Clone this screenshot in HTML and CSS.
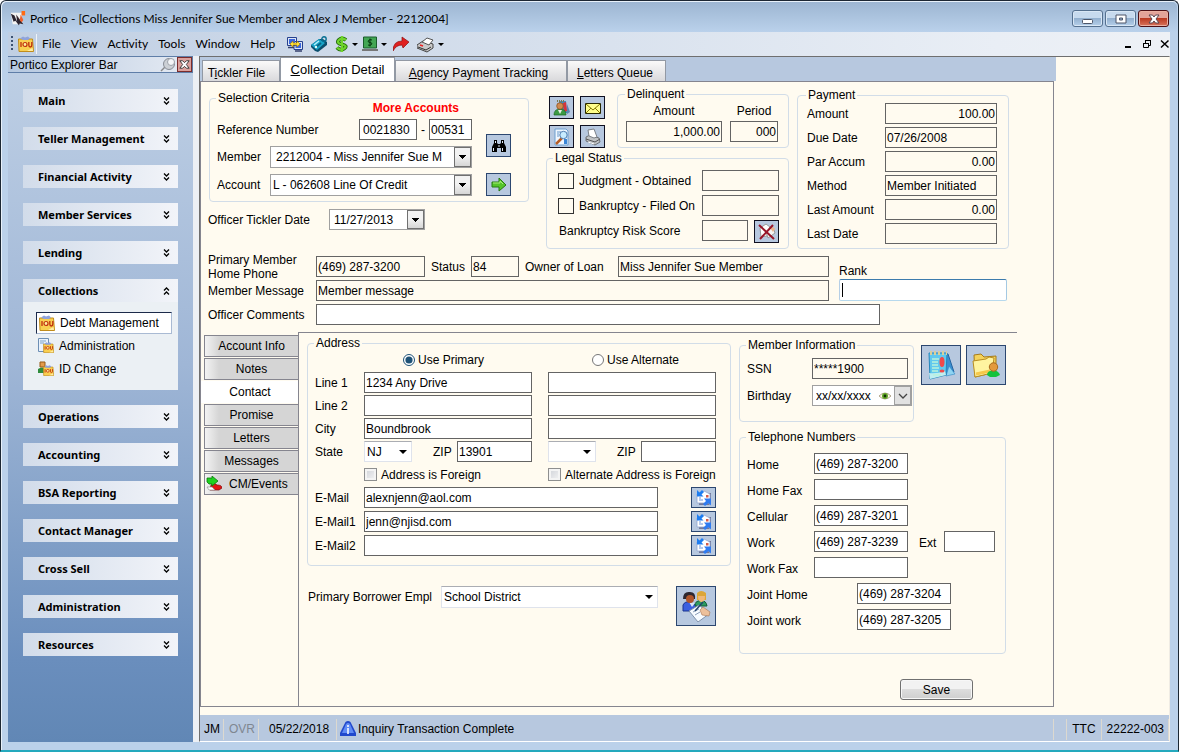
FILE: index.html
```html
<!DOCTYPE html>
<html lang="en">
<head>
  <meta charset="UTF-8" />
  <meta name="viewport" content="width=device-width, initial-scale=1.0"/>
  <title>Portico - Collections</title>
  <link rel="stylesheet" href="styles.css">
</head>
<body>
  <!-- shared icons -->
  <svg class="defs" aria-hidden="true">
    <symbol id="down" viewBox="0 0 7 8"><path d="M1 .5 3.5 3 6 .5M1 4.500 3.500 7 6 4.500" fill="none" stroke="#000" stroke-width="1.300"/></symbol>
    <symbol id="up" viewBox="0 0 7 8"><path d="M1 3.500 3.500 1 6 3.500M1 7.500 3.500 5 6 7.500" fill="none" stroke="#000" stroke-width="1.300"/></symbol>
    <symbol id="iou" viewBox="0 0 16 16">
      <path d="M.5 3h14l1 12.500H1z" fill="#f9cf50" stroke="#c08c1c"/>
      <path d="M2 2.500l3-2 2 1 3-1 2 2-2 1.500H5z" fill="#8fa3dc"/>
      <path d="M3 6v5M10.800 6v3q0 2 1.500 2t1.500-2V6" fill="none" stroke="#c03010" stroke-width="1.300"/>
      <circle cx="7" cy="8.500" r="2" fill="#fff0a0" stroke="#c03010" stroke-width="1.200"/>
      <path d="M9 15h6l-.5-3z" fill="#ffeda5"/>
    </symbol>
    <symbol id="mailsync" viewBox="0 0 16 16">
      <path d="M4 3h11v10l-2 2H3z" fill="#74789a"/>
      <path d="M1 4l7-3 6 3v9H1z" fill="#fff" stroke="#8fa5d0" stroke-width=".8"/>
      <path d="M3 10h4M3 8h2" stroke="#6b92d8"/>
      <path d="M10 5h2.500v2.500H10z" fill="#d55b48"/>
      <path d="M1 0v6.500h6.500l-2-2L8 2 6 0 3.500 2.500z" fill="#1e7df0"/>
      <path d="M15 8.500H8l2 2.500-3 3 2 2 3.500-3 2.500 2.500z" fill="#2f7bf0"/>
    </symbol>
  </svg>

  <div class="window">
    <header class="titlebar">
      <svg class="app-icon" viewBox="0 0 18 18"><path d="M1 2h12v13H3z" fill="#f4f4f4"/><path d="M1 3l4 2 3 7-1-8 8 11-4-1-1 2-4-5-2 1z" fill="#2a2430"/><path d="M6 4l5 6 1-6 3 6-2 3z" fill="#f0602b"/><path d="M13 0h4v5h-4z" fill="#ff6a13"/></svg>
      <h1>Portico - [Collections Miss Jennifer Sue Member and Alex J Member - 2212004]</h1>
      <div class="window-buttons">
        <button aria-label="Minimize"><svg viewBox="0 0 14 12"><rect x="1.500" y="6.500" width="10" height="4" rx="1" fill="#fff" stroke="#4c5568"/></svg></button>
        <button aria-label="Maximize"><svg viewBox="0 0 14 12"><path fill-rule="evenodd" d="M2 2h10v8H2zM5.500 5v2h3V5z" fill="#fff" stroke="#4c5568"/></svg></button>
        <button class="close" aria-label="Close"><svg viewBox="0 0 14 12"><path d="M2 2h3.500L7 4l1.500-2H12L9 6l3 4H8.500L7 8l-1.500 2H2l3-4z" fill="#fff" stroke="#5a4650"/></svg></button>
      </div>
    </header>

    <nav class="menubar">
      <span class="grip"></span>
      <svg class="icon16"><use href="#iou"/></svg>
      <span class="menu-sep"></span>
      <div class="menus">
        <button>File</button>
        <button>View</button>
        <button>Activity</button>
        <button>Tools</button>
        <button>Window</button>
        <button>Help</button>
      </div>
      <div class="tools">
        <button aria-label="Transfer"><svg class="icon16" viewBox="0 0 16 16"><path d="M.5 1.500h9v8h-9zM7 5.500h8.500v8H7z" fill="#dce5f5" stroke="#26418e"/><path d="M2 3h6v5H2zM8.500 7H14v5H8.500z" fill="#3b67dc"/><path d="M1 11.500h6M8 15h7" stroke="#34406e" stroke-width="1.500"/><path d="M3 8l3-3v2h4V5l3 3-3 3V9H6v2z" fill="#ffe23a" stroke="#a67b00" stroke-width=".6"/></svg></button>
        <button aria-label="Ticket"><svg class="icon16" viewBox="0 0 16 16"><path d="M0 9L8 3l4 0 4 3v3l-9 7-3-1-4-4z" fill="#0b4f6e"/><path d="M0 9l8-6 6 4-8 7z" fill="#18a4c8"/><path d="M3 9l5-4" stroke="#b7f2ff" stroke-width="1.500"/><path d="M5 11l5-4" stroke="#0a6687" stroke-width="2"/><circle cx="5" cy="11" r="1.200" fill="#dff"/><circle cx="13" cy="3" r="2.200" fill="none" stroke="#087093" stroke-width="1.400"/></svg></button>
        <button class="drop" aria-label="Money"><svg class="icon14" viewBox="0 0 14 16"><path d="M11 4Q7 1 4 4t3 4.500 2 4-7-1" fill="none" stroke="#276c0e" stroke-width="4"/><path d="M11 4Q7 1 4 4t3 4.500 2 4-7-1M7 0v16" fill="none" stroke="#6fd52c" stroke-width="2.200"/></svg></button>
        <button class="drop" aria-label="Cash"><svg class="icon16" viewBox="0 0 16 16"><path d="M1.500 1h13v11h-13z" fill="#43a654" stroke="#1a5c2c"/><path d="M0 13h16v2H0z" fill="#777"/><path d="M10 4Q8 3 6.500 4.500T8 6.500t1.500 2T6 9M8 2.500v8" fill="none" stroke="#05350e"/></svg></button>
        <button aria-label="Forward"><svg class="icon16" viewBox="0 0 16 16"><path d="M0 15Q0 5 9 5V1l7 5-6 6-1-3Q3 9 0 15z" fill="#e02020" stroke="#8e1010" stroke-width=".7"/></svg></button>
        <button class="drop" aria-label="Print"><svg class="icon18" viewBox="0 0 18 16"><path d="M0 9l6-4 10 3v4l-6 4-10-4z" fill="#c9c9c9" stroke="#444"/><path d="M5 6l5-4 6 2-4 5z" fill="#fff" stroke="#555"/><path d="M1 11l8 3 5-3" fill="none" stroke="#333"/><path d="M3 9l3 1" stroke="#e22" stroke-width="1.500"/></svg></button>
      </div>
      <div class="mdi-buttons">
        <button aria-label="Minimize document"><svg viewBox="0 0 10 10"><path d="M1 8h6" stroke="#000" stroke-width="2"/></svg></button>
        <button aria-label="Restore document"><svg viewBox="0 0 10 10"><path d="M1.500 4.500h5v4h-5zM1 4.500h6M3.500 4V1.500h5v5H7M3 1.500h6" fill="none" stroke="#000"/></svg></button>
        <button aria-label="Close document"><svg viewBox="0 0 10 10"><path d="M1 1.500l7.500 7M8.500 1.500 1 8.500" stroke="#000" stroke-width="1.500"/></svg></button>
      </div>
    </nav>

    <div class="workspace">
      <aside class="explorer">
        <div class="explorer-title">
          <span>Portico Explorer Bar</span>
          <svg class="icon16" viewBox="0 0 16 16"><path d="M1 14l5-5" stroke="#888" stroke-width="1.500"/><circle cx="9" cy="7" r="5.500" fill="#ccd0d5" stroke="#888d96"/><circle cx="11" cy="5" r="3.500" fill="#f4f5f7" stroke="#9da2aa"/></svg>
          <button aria-label="Close explorer"><svg viewBox="0 0 14 14"><path d="M2 3h3l2 2 2-2h3L9 7l3 4H9L7 9l-2 2H2l3-4z" fill="#fff" stroke="#333"/></svg></button>
        </div>
        <div class="groups">
          <button class="group-head">Main<svg><use href="#down"/></svg></button>
          <button class="group-head">Teller Management<svg><use href="#down"/></svg></button>
          <button class="group-head">Financial Activity<svg><use href="#down"/></svg></button>
          <button class="group-head">Member Services<svg><use href="#down"/></svg></button>
          <button class="group-head">Lending<svg><use href="#down"/></svg></button>
          <div>
            <button class="group-head">Collections<svg><use href="#up"/></svg></button>
            <div class="group-body">
              <a href="#" class="active"><svg class="icon16"><use href="#iou"/></svg>Debt Management</a>
              <a href="#"><svg class="icon16" viewBox="0 0 16 16"><path d="M.5.500h10v13H.500z" fill="#eaf2fb" stroke="#6d8fb5"/><path d="M2 3h6M2 5h4" stroke="#7ba3cc"/><use href="#iou" x="5" y="4" width="11" height="11"/></svg>Administration</a>
              <a href="#"><svg class="icon16" viewBox="0 0 16 16"><path d="M0 8q4-3 8 0v4H0z" fill="#2f8c3c"/><path d="M2 1h5v5H2z" fill="#e39a4a" stroke="#955a18"/><use href="#iou" x="5" y="4" width="11" height="11"/></svg>ID Change</a>
            </div>
          </div>
          <button class="group-head">Operations<svg><use href="#down"/></svg></button>
          <button class="group-head">Accounting<svg><use href="#down"/></svg></button>
          <button class="group-head">BSA Reporting<svg><use href="#down"/></svg></button>
          <button class="group-head">Contact Manager<svg><use href="#down"/></svg></button>
          <button class="group-head">Cross Sell<svg><use href="#down"/></svg></button>
          <button class="group-head">Administration<svg><use href="#down"/></svg></button>
          <button class="group-head">Resources<svg><use href="#down"/></svg></button>
        </div>
      </aside>

      <div class="document">
        <main class="collection">
          <div class="tabs">
            <button class="tab-tickler">T<u>i</u>ckler File</button>
            <button class="tab-detail active"><u>C</u>ollection Detail</button>
            <button class="tab-agency"><u>A</u>gency Payment Tracking</button>
            <button class="tab-letters"><u>L</u>etters Queue</button>
          </div>

          <form class="page">
            <div class="top">
              <div class="col-select">
                <fieldset class="selection">
                  <legend>Selection Criteria</legend>
                  <div class="selection-fields">
                    <strong class="more">More Accounts</strong>
                    <div class="line">
                      <label for="ref">Reference Number</label>
                      <span class="push"></span>
                      <input id="ref" class="w-ref" value="0021830"><span class="dash">-</span><input class="w-suffix" aria-label="Reference suffix" value="00531">
                    </div>
                    <div class="line">
                      <label for="member" class="w-lead">Member</label>
                      <span class="combo boxed"><select id="member" class="indent"><option>2212004 - Miss Jennifer Sue M</option></select></span>
                    </div>
                    <div class="line">
                      <label for="account" class="w-lead">Account</label>
                      <span class="combo boxed"><select id="account"><option>L - 062608 Line Of Credit</option></select></span>
                    </div>
                  </div>
                  <div class="selection-buttons">
                    <button type="button" class="tool" aria-label="Find"><svg class="icon16" viewBox="0 0 16 16"><path d="M3 2h3v3l1 1h2l1-1V2h3v3l2 4v5h-5v-4H6v4H1V9l2-4z" fill="#000"/><path d="M2.500 10v3M11.500 10v3M4.500 3v2M11.500 3v2M8 7v2" stroke="#dfe8f4"/></svg></button>
                    <button type="button" class="tool" aria-label="Go"><svg class="icon16" viewBox="0 0 16 16"><path d="M1 5h7V1l7 7-7 6v-4H1z" fill="#55c52b" stroke="#267a12"/><path d="M2 6h7V4l3 3" fill="none" stroke="#a9ec7d"/></svg></button>
                  </div>
                </fieldset>
                <div class="line tickler">
                  <label for="tickler">Officer Tickler Date</label>
                  <span class="combo boxed"><input id="tickler" value="11/27/2013"></span>
                </div>
              </div>

              <div class="col-status">
                <div class="status-top">
                  <div class="tool-grid">
                    <button type="button" class="tool dark" aria-label="Person notes"><svg class="icon18" viewBox="0 0 18 18"><path d="M6 2h7l1 12H6z" fill="#3d8ec2"/><path d="M10 4l3-1 1 9-3 1z" fill="#d8343c"/><path d="M14 5l3 8-3 2z" fill="#5b84b4"/><path d="M1 16q0-6 6-6t6 6z" fill="#3c9a44" stroke="#19681f" stroke-width=".7"/><path d="M5 11l2 4 2-4z" fill="#e8efe8"/><circle cx="7" cy="7" r="3.300" fill="#d18b50" stroke="#874a18" stroke-width=".7"/><path d="M4 2h8" stroke="#7a7a50" stroke-dasharray="1 1" stroke-width="2"/></svg></button>
                    <button type="button" class="tool dark" aria-label="Mail"><svg class="icon18" viewBox="0 0 18 18"><path d="M1.500 4.500h15v10h-15z" fill="#ffff8c" stroke="#2a2a00"/><path d="M2 5l7 6 7-6M2 14l5-5M16 14l-5-5" fill="none" stroke="#857800"/></svg></button>
                    <button type="button" class="tool dark" aria-label="Preview"><svg class="icon18" viewBox="0 0 18 18"><path d="M2 1h11l2 2v14H2z" fill="#eef6ff" stroke="#6d9fcf"/><path d="M4 4h4M4 6h2M4 8h2" stroke="#6898c8"/><path d="M11 11h3v5h-3z" fill="#3a85d5"/><path d="M9 10l-6 6" stroke="#b55d25" stroke-width="2.500"/><circle cx="10.500" cy="7" r="3.700" fill="#c8ecff" stroke="#507db0"/></svg></button>
                    <button type="button" class="tool dark" aria-label="Print"><svg class="icon18" viewBox="0 0 18 18"><path d="M2 9l4-2 9 3 1 4-5 3-9-4z" fill="#bfc2c5" stroke="#6c7075"/><path d="M5 8l-1-6 6-1 3 8-3 1z" fill="#fff" stroke="#7b8087"/><path d="M2 11l9 3 5-3" fill="none" stroke="#555"/><path d="M4 14l6 2" stroke="#fff"/></svg></button>
                  </div>
                  <fieldset class="delinquent">
                    <legend>Delinquent</legend>
                    <label for="dq-amount">Amount</label>
                    <label for="dq-period">Period</label>
                    <input id="dq-amount" class="num" value="1,000.00" readonly>
                    <input id="dq-period" class="num" value="000" readonly>
                  </fieldset>
                </div>
                <fieldset class="legal">
                  <legend>Legal Status</legend>
                  <div class="line">
                    <label class="check"><input type="checkbox" class="big">Judgment - Obtained</label>
                    <input class="w-legal" aria-label="Judgment date" readonly>
                  </div>
                  <div class="line">
                    <label class="check"><input type="checkbox" class="big">Bankruptcy - Filed On</label>
                    <input class="w-legal" aria-label="Bankruptcy date" readonly>
                  </div>
                  <div class="line score">
                    <label for="risk">Bankruptcy Risk Score</label>
                    <input id="risk" class="w-risk" readonly>
                    <button type="button" class="tool dark" aria-label="Clear score"><svg class="icon18" viewBox="0 0 18 18"><path d="M2 5l6-4 4 3-3 9-6 1z" fill="#fff" stroke="#999"/><path d="M8 9q4-6 8-2l1 3-7 5z" fill="#f4f4f4" stroke="#999"/><path d="M12 5q4-2 5 1l-2 3z" fill="#eab28c"/><path d="M1 2l15 14M15 2L2 16" stroke="#981528" stroke-width="2"/></svg></button>
                  </div>
                </fieldset>
              </div>

              <fieldset class="payment">
                <legend>Payment</legend>
                <label for="p-amount">Amount</label><input id="p-amount" class="num" value="100.00" readonly>
                <label for="p-due">Due Date</label><input id="p-due" value="07/26/2008" readonly>
                <label for="p-accum">Par Accum</label><input id="p-accum" class="num" value="0.00" readonly>
                <label for="p-method">Method</label><input id="p-method" value="Member Initiated" readonly>
                <label for="p-last">Last Amount</label><input id="p-last" class="num" value="0.00" readonly>
                <label for="p-date">Last Date</label><input id="p-date" readonly>
              </fieldset>
            </div>

            <div class="member-info">
              <div class="member-rows">
                <div class="line">
                  <label for="phone" class="w-label">Primary Member<br>Home Phone</label>
                  <input id="phone" class="w-phone" value="(469) 287-3200" readonly>
                  <label for="status" class="w-status-label">Status</label>
                  <input id="status" class="w-status" value="84" readonly>
                  <label for="owner" class="w-owner-label">Owner of Loan</label>
                  <input id="owner" class="grow" value="Miss Jennifer Sue Member" readonly>
                </div>
                <div class="line">
                  <label for="message" class="w-label">Member Message</label>
                  <input id="message" class="grow" value="Member message" readonly>
                </div>
              </div>
              <div class="rank">
                <label for="rank">Rank</label>
                <input id="rank">
              </div>
            </div>
            <div class="line comments">
              <label for="comments" class="w-label">Officer Comments</label>
              <input id="comments" class="w-comments">
            </div>

            <div class="bottom">
              <div class="side-tabs">
                <button type="button">Account Info</button>
                <button type="button">Notes</button>
                <button type="button" class="active">Contact</button>
                <button type="button">Promise</button>
                <button type="button">Letters</button>
                <button type="button">Messages</button>
                <button type="button" class="with-icon"><svg class="icon16" viewBox="0 0 16 16"><path d="M5 9q4-3 6 0 5 0 5 3l-3 2H4z" fill="#e11414" stroke="#7c0808" stroke-width=".7"/><path d="M1 11h5l3 3H3z" fill="#fff" stroke="#888" stroke-width=".6"/><path d="M1 2h5V0l6 5-6 5V8H3L1 6z" fill="#1fd11f" stroke="#0a7a0a" stroke-width=".8"/></svg>CM/Events</button>
              </div>

              <div class="contact">
                <div class="contact-left">
                  <fieldset class="address">
                    <legend>Address</legend>
                    <div class="address-grid">
                      <span></span>
                      <label class="pick"><input type="radio" name="which" checked>Use Primary</label>
                      <label class="pick alt"><input type="radio" name="which">Use Alternate</label>

                      <label for="line1">Line 1</label>
                      <input id="line1" value="1234 Any Drive">
                      <input aria-label="Alternate line 1">

                      <label for="line2">Line 2</label>
                      <input id="line2">
                      <input aria-label="Alternate line 2">

                      <label for="city">City</label>
                      <input id="city" value="Boundbrook">
                      <input aria-label="Alternate city">

                      <label for="state">State</label>
                      <div class="state-zip">
                        <span class="combo"><select id="state"><option>NJ</option></select></span>
                        <label for="zip">ZIP</label>
                        <input id="zip" value="13901">
                      </div>
                      <div class="state-zip">
                        <span class="combo"><select aria-label="Alternate state"><option></option></select></span>
                        <label for="zip2">ZIP</label>
                        <input id="zip2">
                      </div>

                      <span></span>
                      <label class="foreign"><input type="checkbox">Address is Foreign</label>
                      <label class="foreign"><input type="checkbox">Alternate Address is Foreign</label>
                    </div>
                    <div class="mail-grid">
                      <label for="mail">E-Mail</label>
                      <input id="mail" value="alexnjenn@aol.com">
                      <button type="button" class="tool short" aria-label="Send to E-Mail"><svg class="icon16"><use href="#mailsync"/></svg></button>
                      <label for="mail1">E-Mail1</label>
                      <input id="mail1" value="jenn@njisd.com">
                      <button type="button" class="tool short" aria-label="Send to E-Mail1"><svg class="icon16"><use href="#mailsync"/></svg></button>
                      <label for="mail2">E-Mail2</label>
                      <input id="mail2">
                      <button type="button" class="tool short" aria-label="Send to E-Mail2"><svg class="icon16"><use href="#mailsync"/></svg></button>
                    </div>
                  </fieldset>
                  <div class="employer">
                    <label for="employer">Primary Borrower Empl</label>
                    <span class="combo"><select id="employer"><option>School District</option></select></span>
                    <button type="button" class="tool large" aria-label="Borrower details"><svg class="icon32" viewBox="0 0 32 32"><path d="M3 21V15q2-4 7-3l6 3-2 6z" fill="#3b5fe0" stroke="#1b348e"/><path d="M9 12l3 5 3-4z" fill="#dce6f5"/><path d="M15 16q0-6 6-5 5-1 6 5z" fill="#2c9b62" stroke="#155c37"/><path d="M3 9q0-8 7-7 6 0 5 7z" fill="#2d2730"/><circle cx="10" cy="9" r="4" fill="#b0562c"/><path d="M17 3q4-4 9 0v7h-9z" fill="#dca637"/><path d="M18 6h7q0 6-3.500 6T18 6z" fill="#f0b878"/><path d="M9 21l10-6 10 9-11 8z" fill="#f7fbff" stroke="#7f91aa"/><path d="M13 22l6-3M15 25l5-3" stroke="#8b9db8"/><path d="M20 20l3-3 7 5-1 4-7-1z" fill="#edc09b" stroke="#a87450" stroke-width=".6"/><path d="M15 21l8-9" stroke="#23446e" stroke-width="1.500"/></svg></button>
                  </div>
                </div>

                <div class="contact-right">
                  <div class="member-top">
                    <fieldset class="member-card">
                      <legend>Member Information</legend>
                      <div class="line">
                        <label for="ssn" class="w-mini">SSN</label>
                        <input id="ssn" class="w-ssn" value="*****1900" readonly>
                      </div>
                      <div class="line">
                        <label for="birthday" class="w-mini">Birthday</label>
                        <span class="birthday"><input id="birthday" value="xx/xx/xxxx"><svg class="eye" viewBox="0 0 14 10"><path d="M1 5q6-6 12 0-6 6-12 0z" fill="#fffbe8" stroke="#b3a58c"/><circle cx="7" cy="5" r="3" fill="#62a626"/><circle cx="7" cy="5" r="1.400" fill="#123008"/></svg><button type="button" aria-label="Pick birthday"><svg viewBox="0 0 10 6"><path d="M1 1l4 4 4-4" fill="none" stroke="#444" stroke-width="1.300"/></svg></button></span>
                      </div>
                    </fieldset>
                    <button type="button" class="tool large" aria-label="Notes"><svg class="icon32" viewBox="0 0 32 32"><path d="M16 5l7 0 6 18-8 3z" fill="#398ed0" stroke="#2464a0"/><path d="M24 17l6 8-9 2z" fill="#8fd4f2" stroke="#2f86c4" stroke-width=".6"/><path d="M4 4h18l-1 22-16 4z" fill="#61c8ee" stroke="#2586bc"/><path d="M4 24q8 1 16-2l1 4-16 4z" fill="#bfeef0"/><path d="M7 10h7M7 13h6M7 16h6M7 19h7M7 22h6M8 26h8" stroke="#b9f2dc" stroke-width="1.500"/><path d="M5 4h17" stroke="#d9cf9a" stroke-width="4" stroke-dasharray="2 2"/><ellipse cx="17" cy="13" rx="2.500" ry="5" fill="#f04a4a"/><ellipse cx="17" cy="22" rx="2.500" ry="1.500" fill="#f04a4a"/></svg></button>
                    <button type="button" class="tool large" aria-label="Member folder"><svg class="icon32" viewBox="0 0 32 32"><path d="M4 6l7-1 3 3 12-1v16L5 28z" fill="#f4d35c" stroke="#a77b18"/><path d="M3 12l13-2 3-2 5 1-2 15-17 4z" fill="#fff4a0" stroke="#b98d20"/><path d="M6 25l14-3" stroke="#f6c84a" stroke-width="3"/><path d="M17 26q0-4 6-5 6 1 7 5l-4 2h-6z" fill="#14c23c"/><circle cx="23.500" cy="18" r="4.200" fill="#e39a3c" stroke="#a86a1c"/></svg></button>
                  </div>
                  <fieldset class="phones">
                    <legend>Telephone Numbers</legend>
                    <div class="line"><label for="t-home">Home</label><input id="t-home" value="(469) 287-3200"></div>
                    <div class="line"><label for="t-fax">Home Fax</label><input id="t-fax"></div>
                    <div class="line"><label for="t-cell">Cellular</label><input id="t-cell" value="(469) 287-3201"></div>
                    <div class="line"><label for="t-work">Work</label><input id="t-work" value="(469) 287-3239"><label for="t-ext" class="ext-label">Ext</label><input id="t-ext" class="ext"></div>
                    <div class="line"><label for="t-wfax">Work Fax</label><input id="t-wfax"></div>
                    <div class="line joint"><label for="t-jhome">Joint Home</label><input id="t-jhome" value="(469) 287-3204"></div>
                    <div class="line joint"><label for="t-jwork">Joint work</label><input id="t-jwork" value="(469) 287-3205"></div>
                  </fieldset>
                  <button type="submit" class="save">Save</button>
                </div>
              </div>
            </div>
          </form>
        </main>

        <footer class="statusbar">
          <span>JM</span>
          <span class="off">OVR</span>
          <span class="date">05/22/2018</span>
          <span class="message"><svg class="icon16" viewBox="0 0 16 16"><path d="M5.500 1q2.500-2 5 0L16 12v3H0v-3z" fill="#2048cc"/><path d="M6 3q2-2 4 0l4 9H2z" fill="#5f8bf5"/><path d="M8 7v6M8 4v2" stroke="#fff" stroke-width="1.500"/></svg>Inquiry Transaction Complete</span>
          <span class="blank"></span>
          <span>TTC</span>
          <span class="last">22222-003</span>
        </footer>
      </div>
    </div>
  </div>
</body>
</html>
```
FILE: styles.css
```css
*, *::before, *::after { box-sizing: border-box; }
body {
  margin: 0;
  font-family: "Liberation Sans", Arial, sans-serif;
  font-size: 12px;
  line-height: 14px;
  color: #000;
}
button, input, select {
  font: inherit;
  color: inherit;
  margin: 0;
}
button { padding: 0; border: none; background: none; }
svg { display: block; flex: none; }
.defs { display: none; }
.icon14 { width: 14px; height: 16px; }
.icon16 { width: 16px; height: 16px; }
.icon18 { width: 18px; height: 18px; }
.icon32 { width: 32px; height: 32px; }

/* window frame */
.window {
  min-height: 100vh;
  display: flex;
  flex-direction: column;
  padding: 0 8px 8px 6px;
  background: #bbd1ea;
  border: 1px solid #1c2733;
  border-bottom: 2px solid #24a9bd;
  border-radius: 6px 6px 0 0;
  box-shadow: inset 1px 1px #e8f1fa;
}
.titlebar {
  display: flex;
  align-items: center;
  gap: 4px;
  height: 30px;
  margin: 1px -7px 0 -5px;
  padding: 3px 8px 0 8px;
  background: linear-gradient(#9db6d2, #bad1eb);
  border-radius: 5px 5px 0 0;
}
.app-icon { width: 16px; height: 16px; }
.titlebar h1 {
  flex: 1;
  margin: 0;
  font-family: Lato, "Open Sans", sans-serif;
  font-size: 12px;
  font-weight: normal;
}
.window-buttons { display: flex; gap: 2px; }
.window-buttons button {
  display: grid;
  place-items: center;
  width: 31px;
  height: 17px;
  border: 1px solid #55708f;
  border-radius: 3px;
  background: linear-gradient(#c7daee 45%, #93b0cf 50%, #b6d0ea);
  box-shadow: inset 0 0 0 1px #d9e7f5;
}
.window-buttons .close {
  border-color: #4d1016;
  background: linear-gradient(#e3a399 45%, #bb3a22 50%, #d8745d);
  box-shadow: inset 0 0 0 1px #eab0a2;
}
.window-buttons svg { width: 14px; height: 12px; }

.menubar {
  display: flex;
  align-items: center;
  height: 24px;
  margin-left: 1px;
  padding: 0 0 0 3px;
  background: linear-gradient(to right, #c0cfe3, #e9eef5 85%, #eef1f6);
}
.grip {
  width: 2px;
  height: 16px;
  margin-right: 5px;
  background: repeating-linear-gradient(#3c5272 0 2px, transparent 2px 4px);
}
.menu-sep { width: 1px; height: 20px; margin: 0 5px 0 2px; background: #eef3fa; }
.menus { display: flex; gap: 10px; font-family: Lato, "Open Sans", sans-serif; }
.tools { display: flex; align-items: center; gap: 8px; margin-left: 12px; }
.tools .drop { display: flex; align-items: center; gap: 3px; }
.tools .drop::after {
  content: "";
  border: 3px solid transparent;
  border-top-color: #000;
  border-bottom: 0;
}
.tools .drop + .drop { margin-left: -4px; }
.tools .drop + button { margin-left: -2px; }
.mdi-buttons { display: flex; gap: 8px; margin-left: auto; }
.mdi-buttons svg { width: 10px; height: 10px; }

.workspace { flex: 1; display: flex; margin-left: 1px; background: #edf0f4; }

/* explorer bar */
.explorer {
  width: 185px;
  flex: none;
  background: linear-gradient(#bfd0e5, #9fb6d6 45%, #8ba7cc 62%, #6a8ebd 88%, #6187b5);
}
.explorer-title {
  display: flex;
  align-items: center;
  height: 17px;
  padding-left: 2px;
  border: 1px solid #5f7ea8;
  border-left: 0;
  background: linear-gradient(to right, #b5c8e0, #e6ebf3);
}
.explorer-title span { flex: 1; }
.explorer-title button {
  width: 15px;
  height: 15px;
  margin-left: 1px;
  border: 1px solid #7a2c2c;
  background: #dba09c;
}
.explorer-title button svg { width: 13px; height: 13px; }
.groups { display: grid; gap: 15px; padding: 16px 15px; }
.group-head {
  display: flex;
  align-items: center;
  justify-content: space-between;
  width: 100%;
  height: 23px;
  padding: 0 8px 0 15px;
  background: linear-gradient(to right, #d2dcea, #f2f4f9);
  font-family: "Noto Sans", "Open Sans", sans-serif;
  font-size: 11px;
  font-weight: bold;
}
.group-head svg { width: 7px; height: 8px; }
.group-body {
  display: grid;
  gap: 1px;
  height: 88px;
  align-content: start;
  padding: 10px 6px 0 13px;
  background: #ebf0f4;
}
.group-body a {
  display: flex;
  align-items: center;
  gap: 5px;
  height: 22px;
  padding-left: 2px;
  color: inherit;
  text-decoration: none;
}
.group-body .active {
  background: #fff;
  border: 1px solid #1c2a4a;
  border-right-color: #a9bad3;
  border-bottom-color: #a9bad3;
}

/* document area */
.document {
  flex: 1;
  display: flex;
  flex-direction: column;
  margin-left: 6px;
  border: 1px solid #6f6f6f;
  border-right-color: #f0ece4;
  border-bottom-color: #fff;
  background: #fffbf0;
}
.collection {
  flex: 1;
  display: flex;
  flex-direction: column;
  margin: 0 113px 8px 0;
}
.tabs {
  display: flex;
  align-items: flex-end;
  height: 24px;
  padding-left: 2px;
  background: #b7c8df;
}
.tabs button {
  height: 21px;
  padding-top: 3px;
  border: 1px solid #9299a4;
  border-bottom: 0;
  background: linear-gradient(#fafafa, #d9d9dc);
}
.tabs .active { height: 24px; padding-top: 0; background: #fff; font-size: 13px; }
.tabs .tab-tickler { width: 78px; padding-right: 9px; }
.tab-detail { width: 115px; }
.tabs .tab-agency { width: 172px; padding-right: 5px; }
.tabs .tab-letters { width: 99px; padding-right: 3px; }

.page {
  flex: 1;
  display: flex;
  flex-direction: column;
  margin-right: 2px;
  padding: 7px 0 0 7px;
  border: 1px solid #85858f;
}
.top { display: flex; gap: 8px; }
.line { display: flex; align-items: center; }
.push { flex: 1; }
.grow { flex: 1; min-width: 0; }

fieldset {
  margin: 0;
  min-width: 0;
  border: 1px solid #d2dde8;
  border-radius: 4px;
  padding: 0;
}
legend { margin-left: -1px; padding: 0 2px; line-height: 10px; }

input {
  height: 21px;
  padding: 0 2px 0 1px;
  border: 1px solid #646464;
  border-radius: 0;
  background: #fff;
  min-width: 0;
}
input[readonly] { background: transparent; }
.num { text-align: right; padding-right: 1px; }

/* drop-downs: the arrow shares the grid cell of the field */
.combo {
  display: grid;
  height: 22px;
  border: 1px solid #dfe3ec;
  border-top-color: #abadb3;
  background: #fff;
}
.combo select, .combo input {
  grid-area: 1 / 1;
  appearance: none;
  width: 100%;
  height: 20px;
  padding: 0 16px 0 2px;
  border: 0;
  border-radius: 0;
  background: none;
}
.combo select.indent { padding-left: 5px; }
.combo::after {
  content: "";
  grid-area: 1 / 1;
  place-self: center end;
  margin-right: 4px;
  border: 4px solid transparent;
  border-top-color: #000;
  border-bottom: 0;
  pointer-events: none;
}
.combo.boxed { border-color: #a0a0a0; }
.combo.boxed::after {
  width: 17px;
  height: 20px;
  margin: 0;
  border: 1px solid #707070;
  background:
    linear-gradient(#000, #000) 50% 7px / 7px 1px no-repeat,
    linear-gradient(#000, #000) 50% 8px / 5px 1px no-repeat,
    linear-gradient(#000, #000) 50% 9px / 3px 1px no-repeat,
    linear-gradient(#000, #000) 50% 10px / 1px 1px no-repeat,
    linear-gradient(#f2f2f2 45%, #d6d6d6);
}

.tool {
  display: grid;
  place-items: center;
  width: 25px;
  height: 23px;
  border: 1px solid #2c4770;
  background: #b7c8df;
}
.tool.dark { border-color: #101020; }
.tool.short { height: 21px; }
.tool.large { width: 40px; height: 40px; flex: none; }

/* selection */
.col-select { width: 321px; margin-right: 9px; }
.selection {
  display: flex;
  margin: 4px 0 7px 1px;
  padding: 0 17px 5px 7px;
}
.selection-fields { flex: 1; display: grid; gap: 6px; }
.selection-fields .combo { flex: 1; }
.more { height: 10px; padding-right: 13px; line-height: 10px; color: #f00; text-align: right; }
.selection-buttons { display: grid; gap: 16px; margin-left: 14px; align-content: end; }
.w-ref { width: 58px; padding-left: 3px; }
.w-suffix { width: 43px; }
.dash { width: 12px; text-align: center; }
.w-lead { width: 53px; }
.tickler label { width: 121px; }
.tickler .combo { width: 96px; height: 21px; }
.tickler .combo input { height: 19px; padding-left: 4px; }
.tickler .combo::after { height: 19px; }

/* status column */
.col-status { width: 243px; }
.status-top { display: flex; justify-content: space-between; margin-bottom: 5px; }
.tool-grid { display: grid; grid-template-columns: 25px 25px; gap: 6px; align-content: end; margin-left: 3px; }
.delinquent {
  display: grid;
  grid-template-columns: 96px 48px;
  gap: 4px 8px;
  width: 172px;
  padding: 6px 0 5px 8px;
}
.delinquent label { line-height: 12px; text-align: center; }
.legal { display: grid; gap: 4px; padding: 7px 9px 5px 11px; }
.legal legend { margin-left: -5px; }
.legal .line { justify-content: space-between; }
.legal .score { gap: 6px; align-items: flex-start; }
.score label { flex: 1; padding: 4px 0 0 1px; }
.check { display: flex; align-items: center; gap: 5px; }
.big { appearance: none; width: 16px; height: 16px; border: 1px solid #333; background: transparent; }
.w-legal { width: 77px; }
.w-risk { width: 46px; }
.payment {
  display: grid;
  grid-template-columns: 78px 112px;
  align-items: center;
  gap: 3px 0;
  width: 212px;
  margin-top: 1px;
  padding: 3px 0 4px 9px;
}

/* member rows */
.member-info { display: flex; align-items: flex-end; gap: 10px; margin: 7px 0 3px; }
.member-rows { display: grid; gap: 3px; width: 621px; }
.member-rows .line { height: 21px; }
.w-label { width: 108px; flex: none; }
.w-phone { width: 109px; }
.w-status-label { width: 46px; padding-left: 6px; }
.w-status { width: 48px; }
.w-owner-label { width: 99px; padding-left: 6px; }
.w-comments { width: 564px; }
.rank { display: grid; gap: 1px; width: 168px; }
.rank input {
  height: 22px;
  border-color: #3d7bad #a4c9e3 #b7d9ed #b5cfe7;
  border-radius: 2px;
  background: linear-gradient(#000, #000) 2px 3px / 1px 14px no-repeat #fff;
}

/* bottom half */
.bottom { flex: 1; display: flex; margin: 7px 0 0 -4px; }
.side-tabs { width: 94px; flex: none; padding-top: 3px; }
.side-tabs button {
  display: flex;
  align-items: center;
  justify-content: center;
  width: 100%;
  height: 22px;
  margin-bottom: 1px;
  border: 1px solid #85858f;
  border-right: 0;
  background: linear-gradient(to right, #f3f3f3, #d5d5d5 15%);
}
.side-tabs .active { width: 98px; margin-left: -3px; border: 0; background: #fff; }
.side-tabs .with-icon { justify-content: flex-start; gap: 7px; padding-left: 1px; }
.contact {
  flex: 1;
  display: flex;
  gap: 8px;
  margin-right: 36px;
  padding: 5px 0 0 8px;
  border: 1px solid #85858f;
  border-width: 1px 0 0 1px;
}
.contact-left { width: 424px; }
.contact-right { width: 267px; }
.address { padding: 0 14px 9px 7px; }
.address-grid {
  display: grid;
  grid-template-columns: 49px 168px 168px;
  grid-template-rows: 22px;
  grid-auto-rows: 21px;
  gap: 2px 0;
  align-items: center;
}
.address-grid > :nth-child(3n) { margin-left: 16px; margin-right: -16px; }
.address-grid > input { width: 168px; }
.pick { display: flex; align-items: center; gap: 3px; padding: 2px 0 0 39px; }
.pick.alt { padding-left: 44px; }
.pick input { width: 12px; height: 12px; accent-color: #1e5276; }
.state-zip { display: flex; align-items: center; width: 168px; }
.state-zip .combo { width: 48px; height: 21px; }
.state-zip .combo select { height: 19px; }
.state-zip label { width: 45px; padding-left: 21px; }
.state-zip input { width: 75px; }
.foreign { display: flex; align-items: center; gap: 4px; white-space: nowrap; }
.foreign input {
  appearance: none;
  width: 13px;
  height: 13px;
  flex: none;
  padding: 0;
  border: 1px solid #8e8f8f;
  background: linear-gradient(135deg, #cfd2d8, #f5f5f5);
  box-shadow: inset 0 0 0 2px #f4f4f4;
}
.mail-grid {
  display: grid;
  grid-template-columns: 49px 294px 1fr;
  align-items: center;
  gap: 3px 0;
  margin-top: 2px;
}
.mail-grid label { white-space: nowrap; }
.mail-grid .tool { justify-self: end; }
.employer { display: flex; align-items: flex-start; margin-top: 20px; }
.employer label { width: 134px; padding: 4px 0 0 1px; }
.employer .combo { width: 217px; }
.employer .tool { margin-left: 18px; }

.member-top { display: flex; align-items: flex-start; margin-top: 2px; }
.member-top .tool { margin: 5px 0 0 7px; }
.member-top .tool + .tool { margin-left: 5px; }
.member-card { display: grid; gap: 6px; width: 175px; padding: 8px 0 15px 7px; }
.w-mini { width: 65px; }
.w-ssn { width: 96px; }
.birthday { display: flex; align-items: center; width: 100px; height: 21px; border: 1px solid #a0a0a0; background: #fff; }
.birthday input { flex: 1; width: 60px; height: 19px; padding-left: 3px; border: 0; }
.eye { width: 14px; height: 10px; margin-right: 2px; }
.birthday button {
  display: grid;
  place-items: center;
  width: 17px;
  height: 19px;
  border: 1px solid #a0a0a0;
  background: #e1e1e1;
}
.birthday button svg { width: 10px; height: 6px; }
.phones { display: grid; gap: 5px; margin-top: 10px; padding: 11px 0 23px 7px; }
.phones label { width: 67px; padding-top: 2px; }
.phones input { width: 94px; }
.phones .joint label { width: 110px; }
.phones .ext-label { width: 36px; padding-left: 11px; }
.phones .ext { width: 51px; }
.save {
  display: block;
  width: 73px;
  height: 21px;
  margin: 25px 33px 6px auto;
  border: 1px solid #707070;
  border-radius: 3px;
  background: linear-gradient(#f2f2f2 45%, #dddddd 50%, #cfcfcf);
  box-shadow: inset 0 0 0 1px #f7f7f7;
}

/* status bar */
.statusbar {
  display: flex;
  align-items: center;
  height: 26px;
  padding: 2px 0 0 3px;
  background: #b7c8df;
}
.statusbar span {
  display: flex;
  align-items: center;
  height: 21px;
  padding: 0 5px;
  border-right: 1px solid #dcd9d0;
}
.statusbar span:first-child { padding: 0 3px 0 1px; }
.statusbar .off { padding-right: 3px; color: #7f8791; }
.statusbar .date { padding: 0 7px 0 10px; }
.statusbar .message { flex: 1; gap: 2px; padding-left: 3px; }
.statusbar .blank { width: 13px; padding: 0; }
.statusbar .last { padding-right: 4px; }
```
